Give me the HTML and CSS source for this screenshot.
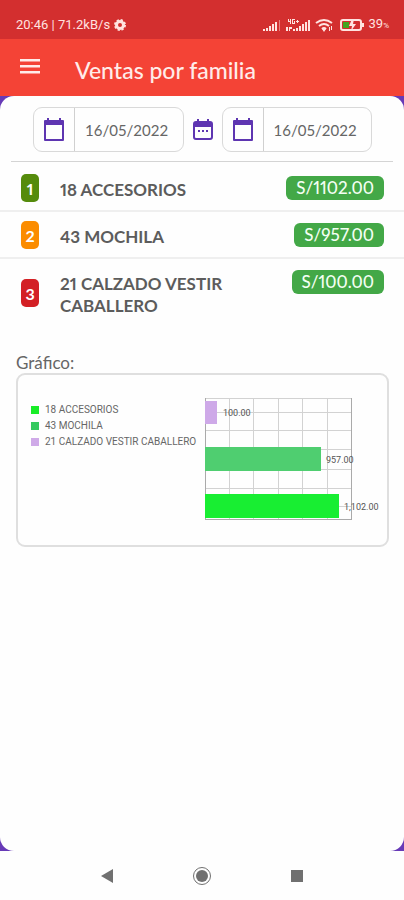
FILE: index.html
```html
<!DOCTYPE html>
<html lang="es">
<head>
<meta charset="utf-8">
<meta name="viewport" content="width=device-width, initial-scale=1">
<title>Ventas por familia</title>
<link rel="stylesheet" href="styles.css">
</head>
<body>
<div class="status">
  <span class="status-text">20:46 | 71.2kB/s</span>
  <svg class="gear" width="12" height="12" viewBox="0 0 12 12"><circle cx="6" cy="6" r="3.5" fill="none" stroke="currentColor" stroke-width="3"/><circle cx="6" cy="6" r="5" fill="none" stroke="currentColor" stroke-width="2" stroke-dasharray="2.2 1.73"/></svg>
  <span class="spacer"></span>
  <svg width="102" height="16" viewBox="0 0 102 16" fill="currentColor">
    <path d="M0 12h2v2H0zM3 11h2v3H3zM6 9h2v5H6zM9 7h2v7H9zM12 5h2v9h-2z"/>
    <path d="M16 3h1v11h-1z" opacity=".45"/>
    <path d="M25 2h1v2h1V2h1v5h-1V5h-2zM29 2h3v1h-2v3h1V4h1v3h-3zM33 4h1V3h1v1h1v1h-1v1h-1V5h-1zM23 10h2v4h-2zM26 10h3v2h-2v2h-1zM30 12h2v2h-2zM33 11h2v3h-2zM36 9h2v5h-2zM39 7h2v7h-2zM42 5h2v9h-2zM45 3h2v11h-2z"/>
    <g fill="none" stroke="currentColor" stroke-width="2"><path d="M53 6q8-6 16 0M56 9q5-4 10 0M59 12q2-2 4 0"/></g>
    <path d="M59 12h4l-2 3zM66 10h1v4h-1zM68 9h1v4h-1z"/>
    <rect x="78" y="3" width="20" height="10" rx="2" fill="none" stroke="currentColor" stroke-width="2"/>
    <rect x="80" y="5" width="6" height="6" fill="#43a520"/>
    <path d="M99 6h2v4h-2zM89 2l-3 7h3l-1 5 5-7h-3l1-5z"/>
  </svg>
  <span class="level">39<small>%</small></span>
</div>
<header class="bar">
  <button class="menu" aria-label="Menú"><svg width="20" height="15" viewBox="0 0 20 15" fill="currentColor"><path d="M0 0h20v2.500H0zM0 6h20v2.500H0zM0 12h20v2.500H0z"/></svg></button>
  <h1>Ventas por familia</h1>
</header>
<div class="backdrop">
<main class="sheet">
  <form class="dates">
    <label class="date"><span class="date-icon"><svg width="22" height="24" viewBox="0 0 22 24"><path d="M2 3h18v19H2z" fill="none" stroke="currentColor" stroke-width="2" stroke-linejoin="round"/><path d="M1 3h20v4H1zM4 0h2v4H4zM16 0h2v4h-2z" fill="currentColor"/></svg></span><input type="text" value="16/05/2022" aria-label="Desde"></label>
    <button type="button" class="range" aria-label="Consultar fechas"><svg width="20" height="22" viewBox="0 0 20 22"><rect x="1" y="3" width="18" height="17" rx="2" fill="none" stroke="currentColor" stroke-width="2"/><path d="M1 3h18v5H1zM4 0h2v4H4zM14 0h2v4h-2zM5 11h2v2H5zM9 11h2v2H9zM13 11h2v2h-2z" fill="currentColor"/></svg></button>
    <label class="date"><span class="date-icon"><svg width="22" height="24" viewBox="0 0 22 24"><path d="M2 3h18v19H2z" fill="none" stroke="currentColor" stroke-width="2" stroke-linejoin="round"/><path d="M1 3h20v4H1zM4 0h2v4H4zM16 0h2v4h-2z" fill="currentColor"/></svg></span><input type="text" value="16/05/2022" aria-label="Hasta"></label>
  </form>
  <ol class="families">
    <li><span class="rank first">1</span><span class="name">18 ACCESORIOS</span><span class="amount">S/1102.00</span></li>
    <li><span class="rank second">2</span><span class="name">43 MOCHILA</span><span class="amount">S/957.00</span></li>
    <li><span class="rank third">3</span><span class="name">21 CALZADO VESTIR CABALLERO</span><span class="amount">S/100.00</span></li>
  </ol>
  <section class="graph">
    <h2>Gráfico:</h2>
    <div class="chart">
      <ul class="legend">
        <li><i class="lime"></i>18 ACCESORIOS</li>
        <li><i class="green"></i>43 MOCHILA</li>
        <li><i class="lilac"></i>21 CALZADO VESTIR CABALLERO</li>
      </ul>
      <svg class="plot" width="180" height="124" viewBox="0 0 180 124">
        <path class="grid" d="M0 .5h147M0 14.500h147M0 32.500h147M0 51.500h147M0 71.500h147M0 90.500h147M0 108.500h147M24.500 0v122M48.500 0v122M73.500 0v122M97.500 0v122M122.500 0v122"/>
        <path class="axis" d="M.5 0v122M146.500 0v122M0 121.500h147"/>
        <rect class="lilac" x="0" y="3" width="12" height="23"/>
        <rect class="green" x="0" y="49" width="116" height="24"/>
        <rect class="lime" x="0" y="96" width="134" height="24"/>
        <text x="18" y="18">100.00</text>
        <text x="121" y="65">957.00</text>
        <text x="139" y="112">1,102.00</text>
      </svg>
    </div>
  </section>
</main>
</div>
<nav class="system">
  <button aria-label="Atrás"><svg width="20" height="20" viewBox="0 0 20 20"><path d="M4 10l12-7v14z"/></svg></button>
  <button aria-label="Inicio"><svg width="20" height="20" viewBox="0 0 20 20"><circle cx="10" cy="10" r="6"/><circle cx="10" cy="10" r="8.500" fill="none" stroke="currentColor"/></svg></button>
  <button aria-label="Recientes"><svg width="20" height="20" viewBox="0 0 20 20"><path d="M4 4h12v12H4z"/></svg></button>
</nav>
</body>
</html>
```
FILE: styles.css
```css
* { box-sizing: border-box; }
body {
  margin: 0;
  min-height: 100vh;
  display: flex;
  flex-direction: column;
  background: #fefefe;
  color: #5c5c5c;
  font-family: Lato, "Open Sans", sans-serif;
  font-variant-numeric: proportional-nums;
}
button { border: 0; padding: 0; background: none; color: inherit; }
svg { display: block; }
ol, ul { list-style: none; margin: 0; padding: 0; }

.status {
  height: 39px;
  padding: 10px 15px 0 16px;
  display: flex;
  align-items: center;
  background: #d32f2f;
  color: #ffe3e0;
  font: 13px/16px Roboto, sans-serif;
}
.gear { margin-left: 4px; }
.spacer { flex: 1; }
.level { margin-left: 4px; }
.level small { font-size: 8px; }

.bar {
  height: 57px;
  padding: 4px 20px 0;
  display: flex;
  align-items: center;
  gap: 35px;
  background: #f44336;
  color: #ffece9;
}
.menu { margin-bottom: 6px; }
.bar h1 { margin: 0; font-size: 23px; line-height: 28px; font-weight: 500; }

.backdrop { flex: 1; display: flex; background: #673ab7; }
.sheet { flex: 1; background: #fefefe; border-radius: 14px; }

.dates {
  margin: 0 11px;
  padding: 11px 21px 9px 22px;
  display: flex;
  align-items: center;
  gap: 9px;
  border-bottom: 1px solid #d4d4d4;
}
.date {
  flex: 1;
  min-width: 0;
  height: 45px;
  display: flex;
  border: 1px solid #d9d9d9;
  border-radius: 9px;
}
.date-icon {
  flex: none;
  width: 41px;
  display: flex;
  align-items: center;
  justify-content: center;
  border-right: 1px solid #d0d0d0;
  color: #5e35b1;
}
.date input {
  flex: 1;
  width: 0;
  padding: 0 0 0 10px;
  border: 0;
  background: none;
  color: #666;
  font: 15px Lato, sans-serif;
}
.range { color: #5e35b1; }

.families li {
  padding: 9px 20px 8px 21px;
  display: flex;
  align-items: flex-start;
  border-bottom: 2px solid #efefef;
}
.families li:first-child { padding-top: 12px; }
.families li:last-child { border-bottom: 0; }
.rank {
  flex: none;
  align-self: center;
  width: 18px;
  height: 28px;
  border-radius: 5px;
  color: #fff;
  font-size: 16px;
  font-weight: 700;
  line-height: 30px;
  text-align: center;
}
.first { background: #558b0c; }
.second { background: #fb8c00; }
.third { background: #d32025; }
.name {
  flex: 1;
  margin-left: 21px;
  padding-top: 5px;
  padding-right: 40px;
  font-size: 17px;
  font-weight: 700;
  line-height: 22px;
}
.amount {
  margin-top: 2px;
  padding: 0 10px;
  border-radius: 6px;
  background: #43a847;
  color: #f3fff3;
  font-size: 17px;
  font-weight: 500;
  line-height: 24px;
}

.graph { padding: 27px 15px 0 16px; }
.graph h2 { margin: 0; font-size: 17px; font-weight: 400; line-height: 21px; color: #666; }
.chart {
  height: 174px;
  padding: 23px 0 0 13px;
  display: flex;
  border: 2px solid #dfdfdf;
  border-radius: 9px;
}
.legend { flex: 1; padding-top: 4px; font: 10px/16px Roboto, sans-serif; color: #666; white-space: nowrap; }
.legend li { display: flex; align-items: center; gap: 6px; }
.legend i { width: 8px; height: 8px; }
.plot { flex: none; margin-right: 2px; }
.plot text { font: 9px Roboto, sans-serif; fill: #555; }
.grid { stroke: #d2d2d2; }
.axis { stroke: #aaa; }
.lime { background: #18ed28; fill: #18ee32; }
.green { background: #35c95f; fill: #4fce70; }
.lilac { background: #cfaae8; fill: #cea9e8; }

.system {
  height: 49px;
  padding: 0 60px;
  display: flex;
  align-items: center;
  justify-content: space-around;
  color: #707070;
}
.system svg { fill: currentColor; }
```
